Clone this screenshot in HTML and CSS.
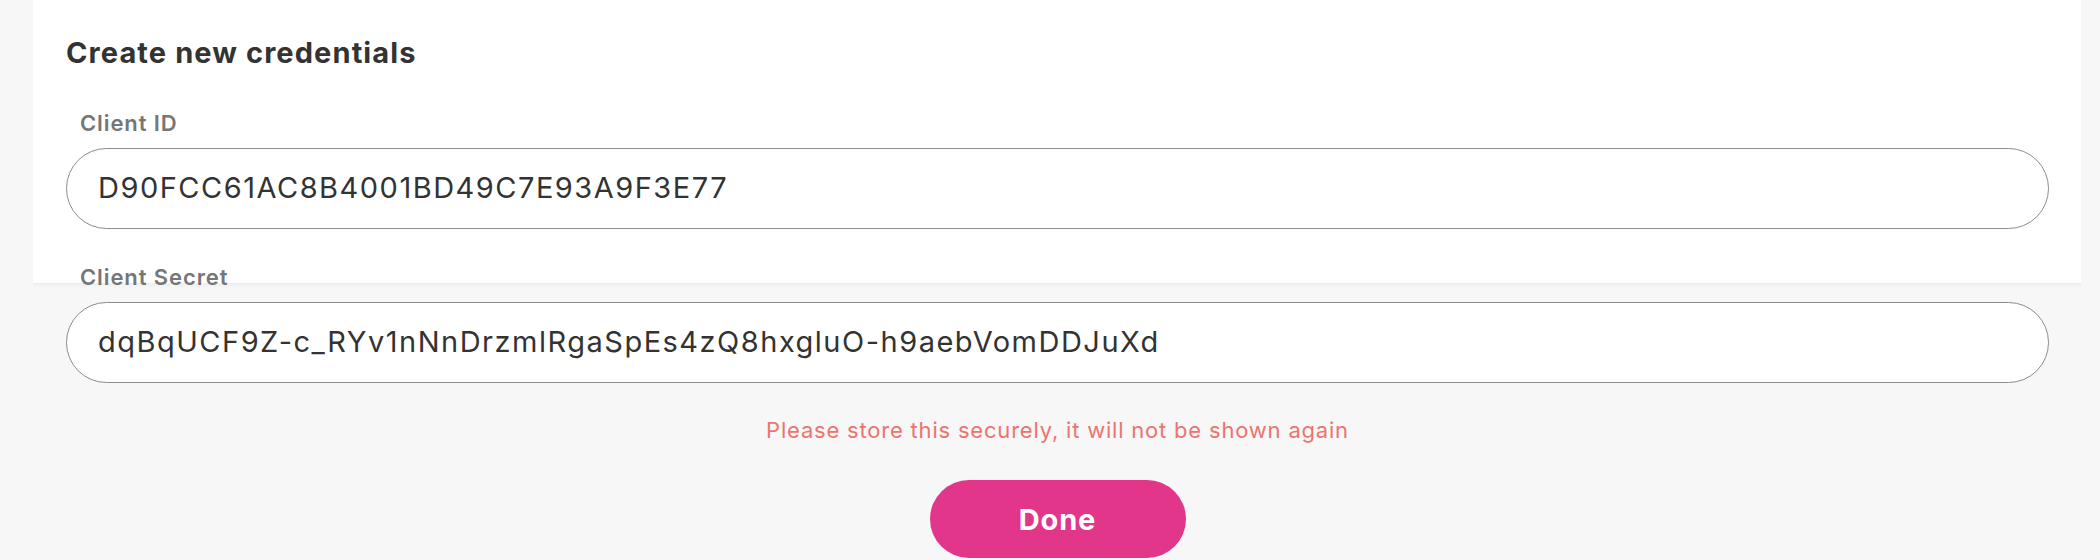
FILE: index.html
```html
<!DOCTYPE html>
<html lang="en">
<head>
<meta charset="utf-8">
<title>Create new credentials</title>
<link rel="stylesheet" href="styles.css">
</head>
<body>
<main class="sheet">
  <h2 class="title">Create new credentials</h2>
  <div class="field">
    <label class="label" for="cid">Client ID</label>
    <input class="input" id="cid" type="text" readonly value="D90FCC61AC8B4001BD49C7E93A9F3E77">
  </div>
  <div class="field field-secret">
    <label class="label" for="csecret">Client Secret</label>
    <input class="input" id="csecret" type="text" readonly value="dqBqUCF9Z-c_RYv1nNnDrzmlRgaSpEs4zQ8hxgluO-h9aebVomDDJuXd">
  </div>
  <p class="warning">Please store this securely, it will not be shown again</p>
  <div class="actions">
    <button class="done" type="button">Done</button>
  </div>
</main>
</body>
</html>
```
FILE: styles.css
```css
* { box-sizing: border-box; }

html, body {
  margin: 0;
  padding: 0;
  background: #f7f7f7;
  font-family: "Inter", "Liberation Sans", sans-serif;
  color: #333333;
}

/* white card that ends at 283px; the form content runs past its bottom edge */
.sheet {
  margin: 0 19px 0 33px;
  padding: 36px 32px 0 33px;
  display: flex;
  flex-direction: column;
  background-image:
    linear-gradient(to bottom,
      #ffffff 0,
      #ffffff 283px,
      rgba(0, 0, 0, 0.045) 283px,
      rgba(0, 0, 0, 0.0) 288px);
  background-repeat: no-repeat;
  background-size: 100% 288px;
}

.title {
  margin: 0;
  font-size: 29px;
  line-height: 34px;
  font-weight: 700;
  letter-spacing: 1.1px;
  color: #333333;
}

.field {
  display: flex;
  flex-direction: column;
  margin-top: 41px;
}

.field-secret {
  margin-top: 36px;
}

.label {
  margin-left: 14px;
  font-size: 22px;
  line-height: 25px;
  font-weight: 600;
  letter-spacing: 0.9px;
  color: #767676;
  margin-bottom: 12px;
}

.input {
  display: block;
  width: 100%;
  height: 81px;
  border: 1px solid #8c8c8c;
  border-radius: 41px;
  background: #ffffff;
  padding: 21px 31px 24px 31px;
  font-family: "Inter", "Liberation Sans", sans-serif;
  font-size: 29px;
  line-height: 34px;
  font-weight: 400;
  letter-spacing: 1.5px;
  color: #333333;
  outline: none;
}

.warning {
  margin: 34px 0 0 0;
  text-align: center;
  font-size: 22px;
  line-height: 27px;
  letter-spacing: 0.8px;
  color: #ec7470;
}

.actions {
  display: flex;
  justify-content: center;
  margin-top: 36px;
}

.done {
  width: 256px;
  height: 78px;
  border: none;
  border-radius: 39px;
  background: #e2368b;
  color: #ffffff;
  font-family: "Inter", "Liberation Sans", sans-serif;
  font-size: 29px;
  font-weight: 700;
  letter-spacing: 0.8px;
  cursor: pointer;
}
```
